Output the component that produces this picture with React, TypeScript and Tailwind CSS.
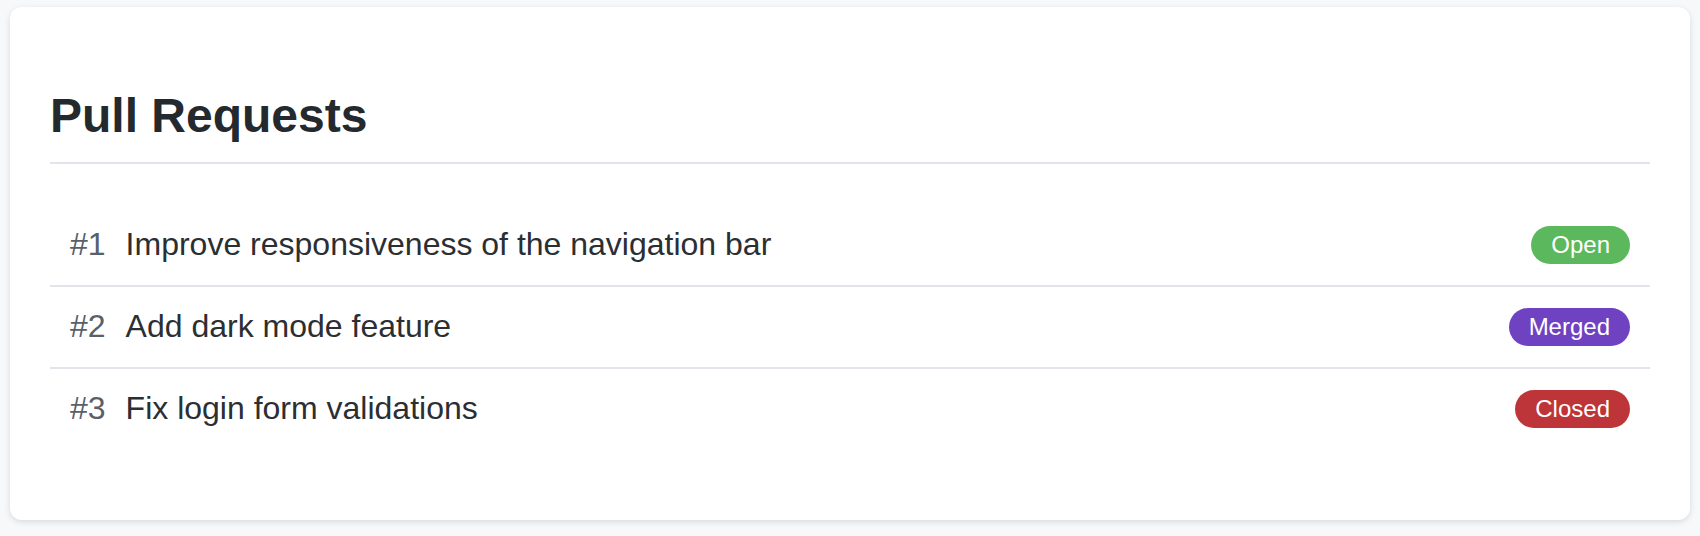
import React from "react";

type PR = { id: number; title: string; status: "Open" | "Merged" | "Closed" };

const prs: PR[] = [
  { id: 1, title: "Improve responsiveness of the navigation bar", status: "Open" },
  { id: 2, title: "Add dark mode feature", status: "Merged" },
  { id: 3, title: "Fix login form validations", status: "Closed" },
];

function Badge({ status }: { status: PR["status"] }) {
  const color =
    status === "Open" ? "bg-[#5cb85c]" : status === "Merged" ? "bg-[#6f42c1]" : "bg-[#bd3538]";
  return (
    <span
      className={`${color} mb-[1px] flex h-[38px] items-center rounded-full px-[20px] text-[24px] leading-none text-white`}
    >
      {status}
    </span>
  );
}

export default function App() {
  return (
    <div
      className="h-[536px] w-[1700px] bg-[#f6f8fa] px-[10px] pt-[7px]"
      style={{ fontFamily: '"Liberation Sans", Arial, sans-serif' }}
    >
      <div className="h-[513px] rounded-[12px] bg-white px-[40px] pt-[81px] shadow-[0_2px_6px_rgba(0,0,0,0.12)]">
        <h2 className="border-b-2 border-[#e1e4e8] pb-[18px] text-[48px] font-bold leading-[56px] text-[#24292e]">
          Pull Requests
        </h2>
        <ul className="mt-[41px]">
          {prs.map((pr, i) => (
            <li
              key={pr.id}
              className={`flex h-[80px] items-center justify-between pl-[20px] pr-[20px] ${
                i < prs.length - 1 ? "box-content border-b-2 border-[#e1e4e8]" : ""
              }`}
            >
              <div className="mb-[2px] flex items-center text-[32px] leading-[37px]">
                <span className="mr-[20px] text-[#586069]">#{pr.id}</span>
                <span className="text-[#2b2f33]">{pr.title}</span>
              </div>
              <Badge status={pr.status} />
            </li>
          ))}
        </ul>
      </div>
    </div>
  );
}
